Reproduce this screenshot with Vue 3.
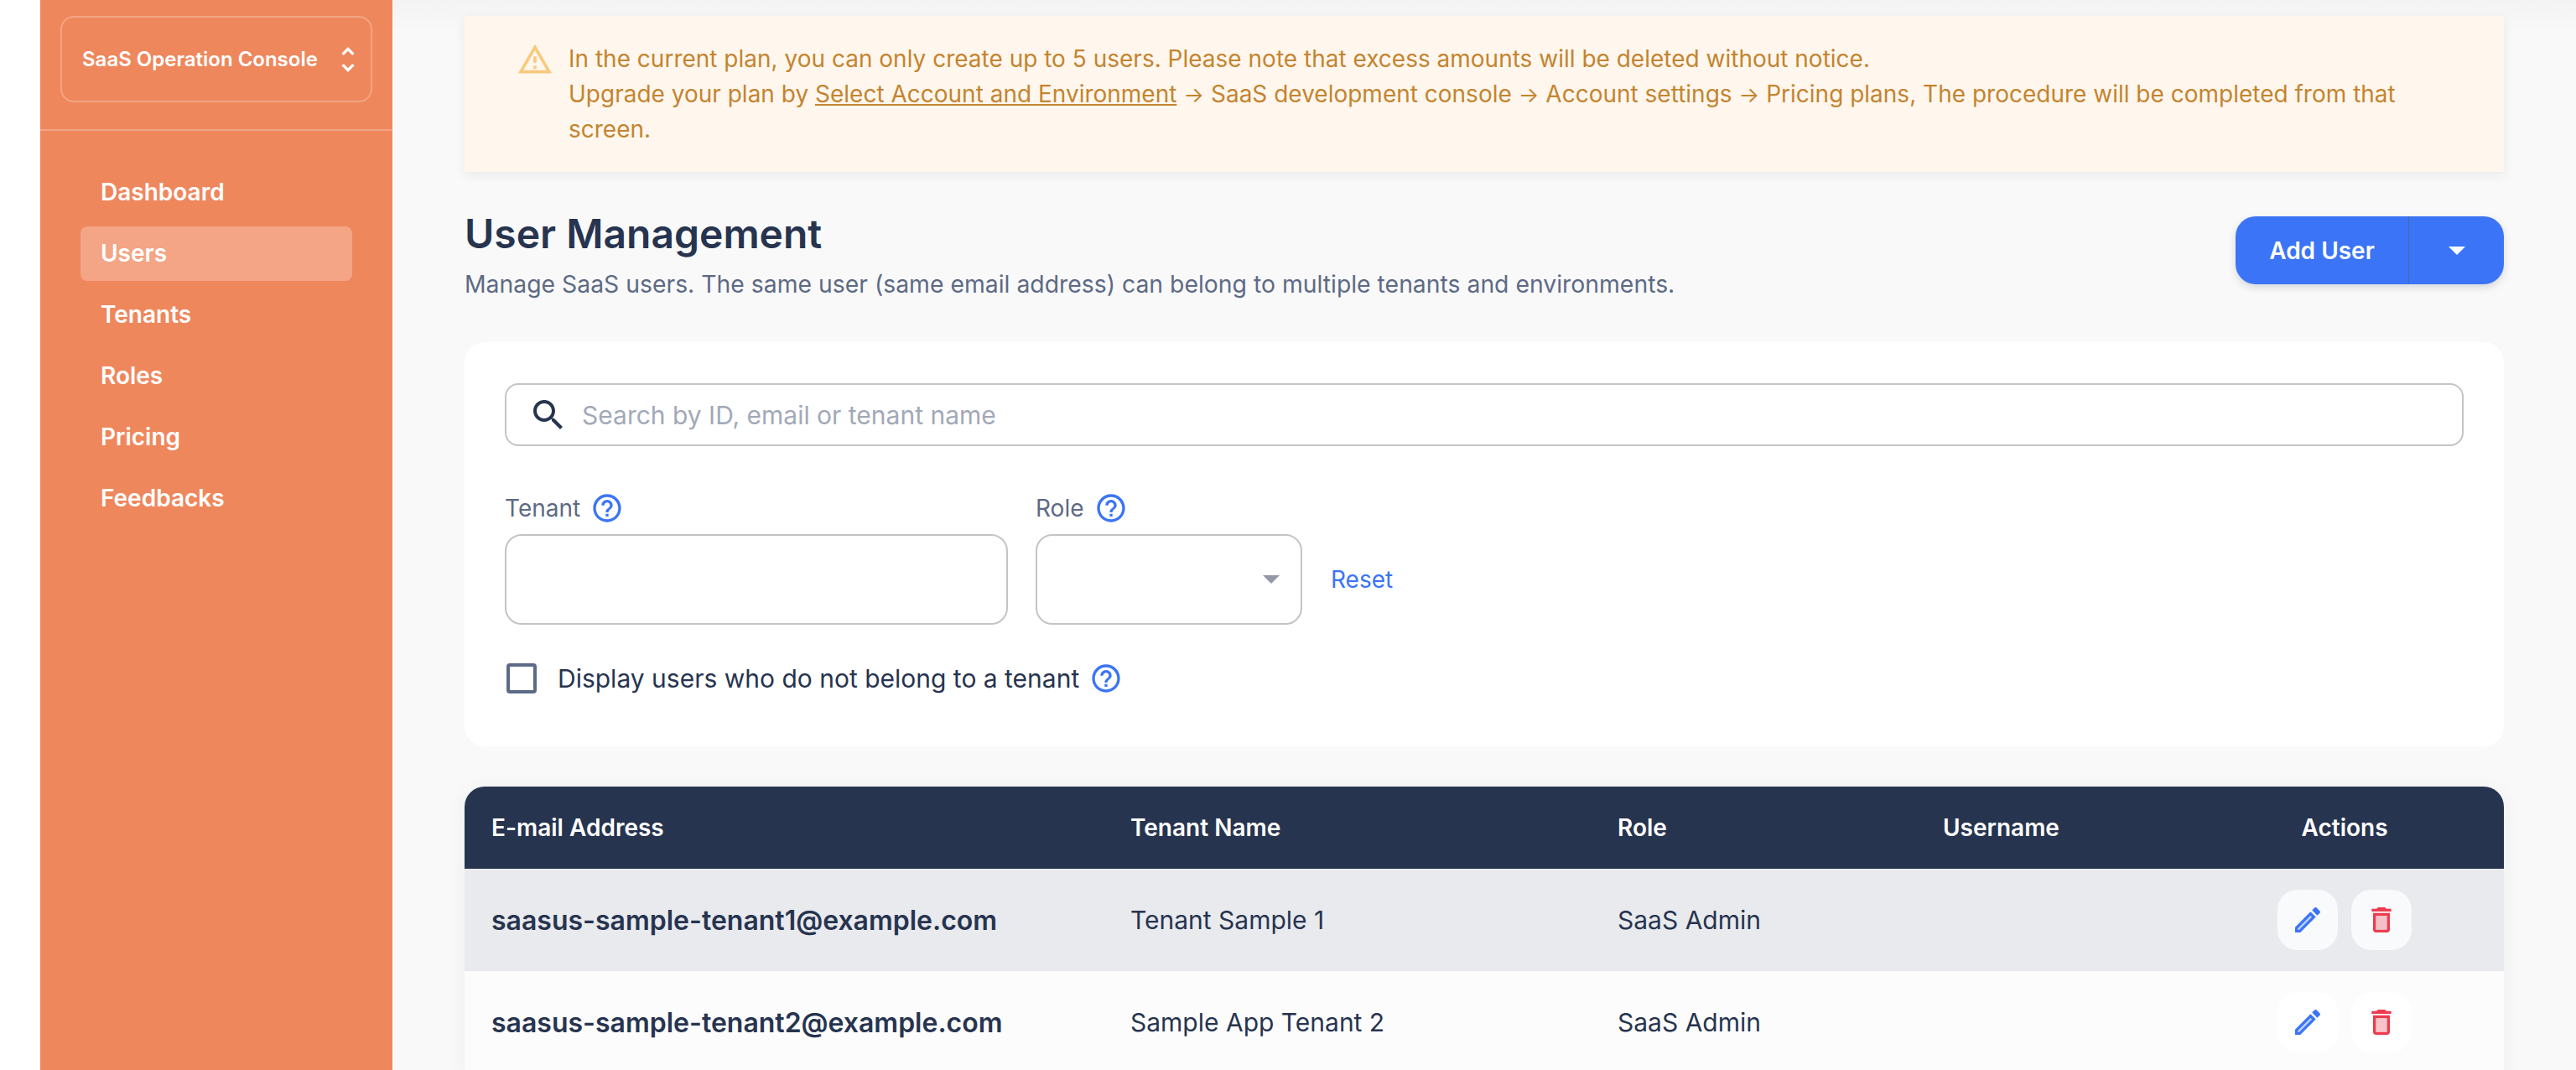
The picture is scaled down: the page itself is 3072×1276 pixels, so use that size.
<script setup>
const navItems = ['Dashboard', 'Users', 'Tenants', 'Roles', 'Pricing', 'Feedbacks']

const users = [
  { email: 'saasus-sample-tenant1@example.com', tenant: 'Tenant Sample 1', role: 'SaaS Admin' },
  { email: 'saasus-sample-tenant2@example.com', tenant: 'Sample App Tenant 2', role: 'SaaS Admin' }
]

const helpPath = 'M11 18h2v-2h-2v2zm1-16C6.48 2 2 6.48 2 12s4.48 10 10 10 10-4.48 10-10S17.52 2 12 2zm0 18c-4.41 0-8-3.59-8-8s3.59-8 8-8 8 3.59 8 8-3.59 8-8 8zm0-14c-2.21 0-4 1.79-4 4h2c0-1.1.9-2 2-2s2 .9 2 2c0 2-3 1.75-3 5h2c0-2.25 3-2.5 3-5 0-2.21-1.79-4-4-4z'
</script>

<template>
  <div class="page">
    <aside class="sidebar">
      <div class="switcher-wrap">
        <div class="switcher">
          <span>SaaS Operation Console</span>
          <svg class="unfold" viewBox="0 0 24 24"><path d="M12 5.83L15.17 9l1.41-1.41L12 3 7.41 7.59 8.83 9 12 5.83zm0 12.34L8.83 15l-1.41 1.41L12 21l4.59-4.59L15.17 15 12 18.17z" /></svg>
        </div>
      </div>
      <nav class="nav">
        <a v-for="item in navItems" :key="item" class="nav-item" :class="{ active: item === 'Users' }">{{ item }}</a>
      </nav>
    </aside>

    <main class="main">
      <div class="notice">
        <svg class="notice-icon" viewBox="0 0 24 24"><path d="M12 5.99L19.53 19H4.47L12 5.99M12 2L1 21h22L12 2zm1 14h-2v2h2v-2zm0-6h-2v4h2v-4z" /></svg>
        <p>
          In the current plan, you can only create up to 5 users. Please note that excess amounts will be deleted without notice.<br />
          Upgrade your plan by <u>Select Account and Environment</u> <span class="arrow">→</span> SaaS development console <span class="arrow">→</span> Account settings <span class="arrow">→</span> Pricing plans, The procedure will be completed from that screen.
        </p>
      </div>

      <header class="head">
        <div>
          <h1>User Management</h1>
          <p>Manage SaaS users. The same user (same email address) can belong to multiple tenants and environments.</p>
        </div>
        <div class="add-btn">
          <span class="add-label">Add User</span>
          <span class="add-arrow"><i class="caret caret-white"></i></span>
        </div>
      </header>

      <section class="filters">
        <div class="search">
          <svg class="search-icon" viewBox="0 0 24 24"><path d="M15.5 14h-.79l-.28-.27C15.41 12.59 16 11.11 16 9.5 16 5.91 13.09 3 9.5 3S3 5.91 3 9.5 5.91 16 9.5 16c1.61 0 3.09-.59 4.23-1.57l.27.28v.79l5 4.99L20.49 19l-4.99-5zm-6 0C7.01 14 5 11.99 5 9.5S7.01 5 9.5 5 14 7.01 14 9.5 11.99 14 9.5 14z" /></svg>
          <span>Search by ID, email or tenant name</span>
        </div>
        <div class="filter-row">
          <div class="field tenant-field">
            <label>Tenant <svg class="help" viewBox="0 0 24 24"><path :d="helpPath" /></svg></label>
            <div class="box"></div>
          </div>
          <div class="field role-field">
            <label>Role <svg class="help" viewBox="0 0 24 24"><path :d="helpPath" /></svg></label>
            <div class="box select"><i class="caret caret-grey"></i></div>
          </div>
          <a class="reset">Reset</a>
        </div>
        <div class="check-row">
          <span class="checkbox"></span>
          <span>Display users who do not belong to a tenant</span>
          <svg class="help" viewBox="0 0 24 24"><path :d="helpPath" /></svg>
        </div>
      </section>

      <section class="table">
        <div class="row head-row">
          <div class="first">E-mail Address</div>
          <div>Tenant Name</div>
          <div>Role</div>
          <div>Username</div>
          <div class="center">Actions</div>
        </div>
        <div v-for="(user, i) in users" :key="user.email" class="row body-row" :class="{ hovered: i === 0 }">
          <div class="first email">{{ user.email }}</div>
          <div>{{ user.tenant }}</div>
          <div>{{ user.role }}</div>
          <div></div>
          <div class="actions">
            <span class="icon-btn">
              <svg class="edit" viewBox="0 0 24 24">
                <path opacity=".3" d="M5 18.08V19h.92l9.06-9.06-.92-.92z" />
                <path d="M20.71 7.04c.39-.39.39-1.02 0-1.41l-2.34-2.34c-.2-.2-.45-.29-.71-.29s-.51.1-.7.29l-1.83 1.83 3.75 3.75 1.83-1.83zM3 17.25V21h3.75L17.81 9.94l-3.75-3.75L3 17.25zM5.92 19H5v-.92l9.06-9.06.92.92L5.92 19z" />
              </svg>
            </span>
            <span class="icon-btn">
              <svg class="trash" viewBox="0 0 24 24">
                <path opacity=".3" d="M8 9h8v10H8z" />
                <path d="M15.5 4l-1-1h-5l-1 1H5v2h14V4zM6 19c0 1.1.9 2 2 2h8c1.1 0 2-.9 2-2V7H6v12zM8 9h8v10H8V9z" />
              </svg>
            </span>
          </div>
        </div>
      </section>
    </main>
  </div>
</template>

<style>
html,
body {
  background: #fff;
  overflow: hidden;
}
</style>

<style scoped>
.page {
  display: flex;
  width: 3072px;
  height: 1276px;
  padding-left: 48px;
  box-sizing: border-box;
  overflow: hidden;
  font-family: Inter, 'Liberation Sans', sans-serif;
  font-size: 28px;
  color: #27344f;
}

.sidebar {
  width: 420px;
  flex-shrink: 0;
  background: #ef875d;
  color: #fff;
}

.switcher-wrap {
  height: 156px;
  padding: 19px 24px 0;
  box-sizing: border-box;
  border-bottom: 2px solid rgba(255, 255, 255, 0.25);
}

.switcher {
  height: 103px;
  display: flex;
  align-items: center;
  justify-content: space-between;
  padding: 0 7px 0 24px;
  box-sizing: border-box;
  border: 2px solid rgba(255, 255, 255, 0.25);
  border-radius: 16px;
  font-size: 24px;
  font-weight: 600;
}

.unfold {
  width: 40px;
  height: 40px;
  fill: #fff;
}

.nav {
  display: flex;
  flex-direction: column;
  gap: 8px;
  padding: 41px 48px 0;
}

.nav-item {
  height: 65px;
  line-height: 65px;
  padding-left: 24px;
  border-radius: 8px;
  font-weight: 600;
}

.nav-item.active {
  background: rgba(255, 255, 255, 0.25);
}

.main {
  flex: 1;
  min-width: 0;
  padding: 19px 86px 0;
  background: linear-gradient(#f3f3f3, #f9f9f9 40px);
}

.notice {
  display: flex;
  gap: 18px;
  padding: 30px 100px 30px 62px;
  background: #fff7ee;
  box-shadow: 0 4px 12px rgba(39, 52, 79, 0.08);
  color: #c4842f;
}

.notice p {
  margin: 0;
  line-height: 42px;
}

.arrow {
  font-size: 26px;
  line-height: 1;
}

.notice-icon {
  width: 44px;
  height: 44px;
  flex-shrink: 0;
  fill: #f9c97c;
}

.head {
  display: flex;
  justify-content: space-between;
  align-items: flex-start;
  margin-top: 53px;
}

.head h1 {
  margin: 0;
  padding-top: 4px;
  font-size: 48px;
  line-height: 34px;
  font-weight: 600;
}

.head p {
  margin: 22px 0 0;
  font-size: 28.35px;
  line-height: 42px;
  color: #5d6a85;
}

.add-btn {
  display: flex;
  width: 320px;
  height: 81px;
  border-radius: 24px;
  background: #3b74f6;
  box-shadow: 0 4px 10px rgba(39, 52, 79, 0.16);
  color: #fff;
  font-weight: 600;
}

.add-label {
  width: 206px;
  display: flex;
  align-items: center;
  justify-content: center;
  border-right: 1px solid #4a68a8;
}

.add-arrow {
  flex: 1;
  display: flex;
  align-items: center;
  justify-content: center;
}

.caret {
  display: block;
  width: 0;
  height: 0;
  border-left: 10px solid transparent;
  border-right: 10px solid transparent;
  border-top: 10px solid #fff;
}

.caret-grey {
  border-top-color: #9497a6;
}

.filters {
  margin-top: 48px;
  height: 482px;
  box-sizing: border-box;
  padding: 49px 48px 0;
  background: #fff;
  border-radius: 24px;
}

.search {
  height: 75px;
  display: flex;
  align-items: center;
  gap: 16px;
  padding-left: 26px;
  box-sizing: border-box;
  border: 2px solid #c4c4c4;
  border-radius: 16px;
  color: #a2a9b8;
  font-size: 30px;
}

.search-icon {
  width: 48px;
  height: 48px;
  fill: #27344f;
}

.filter-row {
  display: flex;
  align-items: flex-end;
  gap: 33px;
  margin-top: 55px;
}

.field label {
  display: flex;
  align-items: center;
  gap: 12px;
  height: 50px;
  padding-bottom: 12px;
  box-sizing: border-box;
  color: #5d6a85;
}

.box {
  height: 108px;
  box-sizing: border-box;
  border: 2px solid #c4c4c4;
  border-radius: 20px;
}

.tenant-field {
  width: 600px;
}

.role-field {
  width: 318px;
}

.select {
  display: flex;
  align-items: center;
  justify-content: flex-end;
  padding-right: 25px;
}

.reset {
  margin-left: 1px;
  color: #3b74f6;
  line-height: 108px;
}

.help {
  width: 40px;
  height: 40px;
  fill: #3b74f6;
  flex-shrink: 0;
}

.check-row {
  display: flex;
  align-items: center;
  margin-top: 46px;
  height: 36px;
  font-size: 30px;
}

.checkbox {
  width: 36px;
  height: 36px;
  box-sizing: border-box;
  margin-left: 2px;
  margin-right: 25px;
  border: 4px solid #5d6a85;
  border-radius: 4px;
}

.check-row .help {
  margin-left: 12px;
}

.table {
  margin-top: 48px;
  border-radius: 24px 24px 0 0;
  overflow: hidden;
  box-shadow: 0 4px 24px rgba(39, 52, 79, 0.06);
}

.row {
  display: grid;
  grid-template-columns: 761px 581px 388px 322px 380px;
  align-items: center;
}

.row > div {
  padding-left: 33px;
}

.row > .first {
  padding-left: 32px;
}

.head-row {
  height: 98px;
  background: #27344f;
  color: #fff;
  font-weight: 600;
}

.row > .center {
  padding: 0;
  text-align: center;
}

.body-row {
  height: 122px;
  background: #fcfcfc;
  box-shadow: inset 0 -1px 0 #e6e7ea;
  font-size: 30px;
}

.body-row.hovered {
  background: #e9eaee;
}

.email {
  font-size: 32px;
  font-weight: 600;
}

.row > .actions {
  display: flex;
  justify-content: center;
  gap: 16px;
  padding: 0;
}

.icon-btn {
  width: 72px;
  height: 72px;
  display: flex;
  align-items: center;
  justify-content: center;
  border-radius: 24px;
  background: #fff;
}

.hovered .icon-btn {
  background: #f8fafc;
}

.icon-btn svg {
  width: 40px;
  height: 40px;
}

.edit {
  fill: #3b74f6;
}

.trash {
  fill: #ee3b4f;
}
</style>
